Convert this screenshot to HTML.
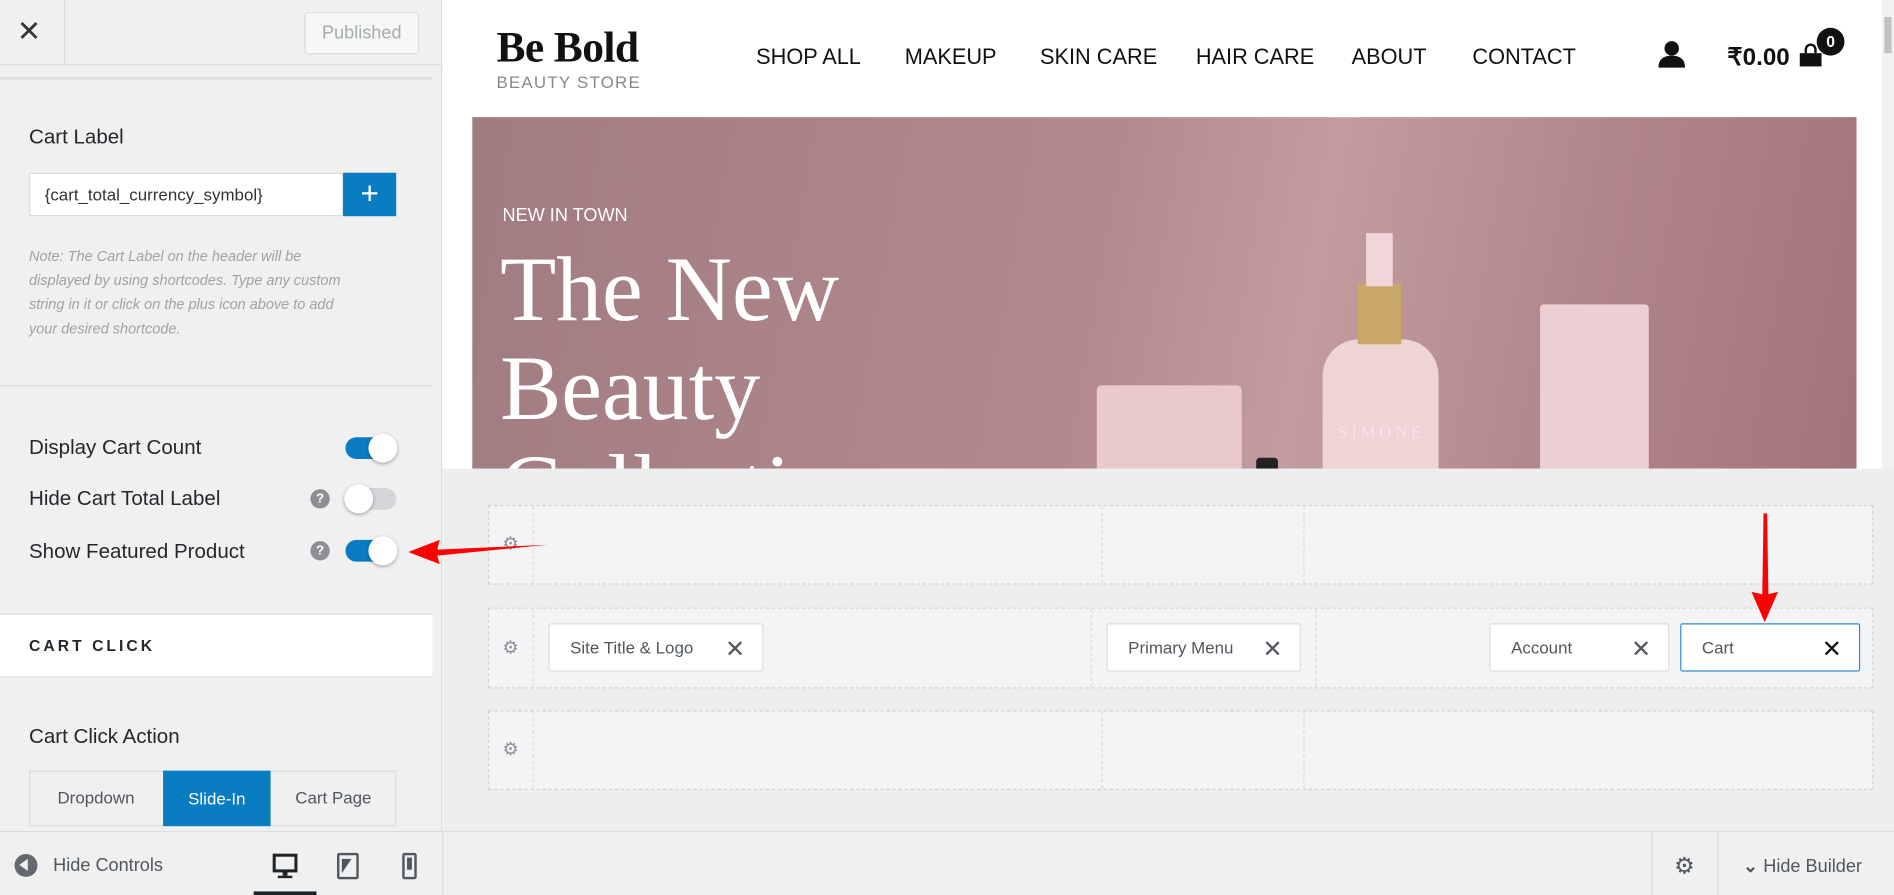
<!DOCTYPE html>
<html><head><meta charset="utf-8"><style>
*{box-sizing:border-box;margin:0;padding:0}
html,body{width:1894px;height:895px;overflow:hidden;background:#fff}
#w{position:absolute;left:0;top:0;width:1568px;height:741px;transform:scale(1.2079);transform-origin:0 0;font-family:"Liberation Sans",sans-serif;color:#23282d}
.a{position:absolute}
.t{white-space:nowrap}
.tg{position:absolute;width:42px;height:18px;border-radius:9px}
.tg i{position:absolute;top:-3px;width:24px;height:24px;border-radius:50%;background:#fff;box-shadow:0 1px 3px rgba(0,0,0,.35)}
.q{position:absolute;width:16px;height:16px;border-radius:50%;background:#8c8f94;color:#fff;font-size:11px;font-weight:bold;text-align:center;line-height:16px}
.row{position:absolute;left:404px;width:1147px;border:1px dashed #d0d3d8;background:#f3f4f6}
.vl{position:absolute;top:0;bottom:0;border-left:1px dashed #d8dadd}
.gear{position:absolute;left:11px;color:#8c8f94;font-size:15px}
.it{position:absolute;top:12px;height:40px;background:#fff;border:1px solid #ddd;border-radius:2px;font-size:14px;color:#50575e;padding:11px 0 0 17px}
.it b{position:absolute;right:14px;top:8px;font-weight:normal;font-size:20px;color:#50575e}
.nav span{position:absolute;top:37px;font-size:18px;color:#111}
</style></head><body><div id="w">
<div class="a" style="left:0;top:0;width:366px;height:741px;background:#f0f0f1;border-right:1px solid #ddd"></div>
<div class="a" style="left:0;top:0;width:366px;height:54px;border-bottom:1px solid #dcdcde"></div>
<div class="a t" style="left:14px;top:12px;font-size:24px;color:#333">✕</div>
<div class="a" style="left:53px;top:0;height:54px;border-left:1px solid #dcdcde"></div>
<div class="a t" style="left:252px;top:10px;width:95px;height:35px;border:1px solid #dcdcde;border-radius:3px;background:#f6f7f7;color:#a7aaad;font-size:15px;text-align:center;line-height:33px">Published</div>
<div class="a" style="left:0;top:64px;width:358px;border-top:2px solid #dcdcde"></div>
<div class="a t" style="left:24px;top:104px;font-size:17px">Cart Label</div>
<div class="a t" style="left:24px;top:143px;width:260px;height:36px;background:#fff;border:1px solid #ddd;font-size:14px;padding:9px 0 0 12px;color:#333">{cart_total_currency_symbol}</div>
<div class="a" style="left:284px;top:143px;width:44px;height:36px;background:#0a7dc2;color:#fff;font-size:26px;text-align:center;line-height:34px">+</div>
<div class="a" style="left:24px;top:202px;width:272px;font-size:12px;line-height:20px;font-style:italic;color:#9ea3a8">Note: The Cart Label on the header will be displayed by using shortcodes. Type any custom string in it or click on the plus icon above to add your desired shortcode.</div>
<div class="a" style="left:0;top:319px;width:358px;border-top:1px solid #dcdcde"></div>
<div class="a t" style="left:24px;top:361px;font-size:17px">Display Cart Count</div>
<div class="tg" style="left:286px;top:362px;background:#0a7dc2"><i style="left:19px"></i></div>
<div class="a t" style="left:24px;top:403px;font-size:17px">Hide Cart Total Label</div>
<div class="q" style="left:257px;top:405px">?</div>
<div class="tg" style="left:286px;top:404px;background:#d4d6da"><i style="left:-1px"></i></div>
<div class="a t" style="left:24px;top:447px;font-size:17px">Show Featured Product</div>
<div class="q" style="left:257px;top:448px">?</div>
<div class="tg" style="left:286px;top:447px;background:#0a7dc2"><i style="left:19px"></i></div>
<div class="a" style="left:0;top:508px;width:358px;height:53px;background:#fff;border-top:1px solid #ddd;border-bottom:1px solid #ddd"></div>
<div class="a t" style="left:24px;top:527px;font-size:13px;letter-spacing:2.5px;font-weight:bold;color:#23282d">CART CLICK</div>
<div class="a t" style="left:24px;top:600px;font-size:17px">Cart Click Action</div>
<div class="a" style="left:24px;top:638px;width:304px;height:46px;border:1px solid #ddd;background:#f0f0f1"></div>
<div class="a t" style="left:24px;top:652px;width:111px;text-align:center;font-size:14px;color:#50575e">Dropdown</div>
<div class="a t" style="left:135px;top:638px;width:89px;height:46px;background:#0a7dc2;color:#fff;text-align:center;font-size:14px;line-height:46px">Slide-In</div>
<div class="a t" style="left:224px;top:652px;width:104px;text-align:center;font-size:14px;color:#50575e">Cart Page</div>
<div class="a" style="left:0;top:688px;width:1568px;height:53px;background:#f0f0f1;border-top:1px solid #dcdcde"></div>
<div class="a" style="left:366px;top:688px;height:53px;border-left:1px solid #dcdcde"></div>
<div class="a" style="left:12px;top:707px;width:19px;height:19px;border-radius:50%;background:#646970"></div>
<div class="a" style="left:16px;top:711px;width:0;height:0;border-top:5.5px solid transparent;border-bottom:5.5px solid transparent;border-right:7px solid #f0f0f1"></div>
<div class="a t" style="left:44px;top:708px;font-size:15px;color:#50575e">Hide Controls</div>
<svg class="a" style="left:225px;top:706px" width="22" height="22" viewBox="0 0 22 22"><rect x="2" y="2" width="18" height="13" fill="none" stroke="#1d2327" stroke-width="2.5"/><rect x="9" y="15" width="4" height="4" fill="#1d2327"/><rect x="5" y="19" width="12" height="2" fill="#1d2327"/></svg>
<div class="a" style="left:210px;top:738px;width:52px;height:3px;background:#1d2327"></div>
<svg class="a" style="left:278px;top:706px" width="20" height="22" viewBox="0 0 20 22"><rect x="2" y="1" width="16" height="20" rx="1" fill="none" stroke="#50575e" stroke-width="2"/><path d="M5 17 L5 5 L13 5 Z" fill="#50575e"/></svg>
<svg class="a" style="left:332px;top:706px" width="14" height="22" viewBox="0 0 14 22"><rect x="2" y="1" width="10" height="20" rx="1" fill="none" stroke="#50575e" stroke-width="2"/><rect x="5" y="4" width="4" height="10" fill="#50575e"/></svg>
<div class="a" style="left:1367px;top:688px;height:53px;border-left:1px solid #dcdcde"></div>
<div class="a" style="left:1422px;top:688px;height:53px;border-left:1px solid #dcdcde"></div>
<div class="a t" style="left:1386px;top:706px;font-size:19px;color:#50575e">⚙</div>
<div class="a t" style="left:1443px;top:708px;font-size:15px;color:#50575e;font-weight:bold">⌄ <span style="font-weight:normal">Hide Builder</span></div>
<div class="a" style="left:367px;top:0;width:1201px;height:388px;background:#fff;overflow:hidden">
 <div class="a t" style="left:44px;top:18px;font-family:'Liberation Serif',serif;font-weight:bold;font-size:36px;color:#111;letter-spacing:-0.5px">Be Bold</div>
 <div class="a t" style="left:44px;top:60px;font-size:14px;color:#888;letter-spacing:1px">BEAUTY STORE</div>
 <div class="nav"><span style="left:259px">SHOP ALL</span><span style="left:382px">MAKEUP</span><span style="left:494px">SKIN CARE</span><span style="left:623px">HAIR CARE</span><span style="left:752px">ABOUT</span><span style="left:852px">CONTACT</span></div>
 <svg class="a" style="left:1006px;top:33px" width="22" height="24" viewBox="0 0 22 24"><circle cx="11" cy="7" r="6" fill="#111"/><path d="M0 23 Q0 13 11 13 Q22 13 22 23 Z" fill="#111"/></svg>
 <div class="a t" style="left:1063px;top:35px;font-size:20px;font-weight:bold;color:#111">₹0.00</div>
 <svg class="a" style="left:1122px;top:36px" width="20" height="20" viewBox="0 0 20 20"><path d="M6 8 V5 a4 4 0 0 1 8 0 V8" fill="none" stroke="#111" stroke-width="2"/><rect x="1" y="8" width="18" height="11" fill="#111"/></svg>
 <div class="a" style="left:1137px;top:23px;width:23px;height:23px;border-radius:50%;background:#111;color:#fff;font-size:13px;font-weight:bold;text-align:center;line-height:23px">0</div>
 <div class="a" style="left:1191px;top:0;width:10px;height:388px;background:#f1f1f1"></div>
 <div class="a" style="left:1193px;top:14px;width:6px;height:30px;background:#c1c1c1"></div>
 <div class="a" style="left:24px;top:97px;width:1146px;height:300px;background:linear-gradient(100deg,#a07c80 0%,#b4898e 45%,#c29ca0 60%,#b08589 80%,#a27478 100%);overflow:hidden">
  <div class="a" style="left:517px;top:222px;width:120px;height:120px;background:#e9c9cc;border-radius:4px"></div>
  <div class="a" style="left:704px;top:184px;width:96px;height:150px;background:#efd4d6;border-radius:30px 30px 0 0"></div>
  <div class="a" style="left:733px;top:138px;width:36px;height:50px;background:#c9a867"></div>
  <div class="a" style="left:740px;top:96px;width:22px;height:44px;background:#f0d6d8"></div>
  <div class="a t" style="left:717px;top:254px;font-family:'Liberation Serif',serif;color:#f5e6e6;font-size:14px;letter-spacing:3px">SIMONE</div>
  <div class="a" style="left:884px;top:155px;width:90px;height:160px;background:#eccfd2;border-radius:3px"></div>
  <div class="a" style="left:649px;top:282px;width:18px;height:20px;background:#222;border-radius:3px"></div>
  <div class="a t" style="left:25px;top:73px;color:#fff;font-size:15px">NEW IN TOWN</div>
  <div class="a" style="left:23px;top:102px;color:#fff;font-family:'Liberation Serif',serif;font-size:76px;line-height:82px">The New<br>Beauty<br>Collection</div>
 </div>
</div>
<div class="a" style="left:366px;top:388px;width:1202px;height:300px;background:#eeeeef"></div>
<div class="row" style="top:418px;height:66px"><div class="vl" style="left:36px"></div><div class="vl" style="left:507px"></div><div class="vl" style="left:674px"></div><div class="gear" style="top:22px">⚙</div></div>
<div class="row" style="top:503px;height:67px"><div class="vl" style="left:36px"></div><div class="vl" style="left:498px"></div><div class="vl" style="left:684px"></div><div class="gear" style="top:23px">⚙</div>
 <div class="it" style="left:49px;width:178px">Site Title &amp; Logo<b>✕</b></div>
 <div class="it" style="left:511px;width:161px">Primary Menu<b>✕</b></div>
 <div class="it" style="left:828px;width:149px">Account<b>✕</b></div>
 <div class="it" style="left:986px;width:149px;border-color:#2e8dcf">Cart<b style="color:#111">✕</b></div>
</div>
<div class="row" style="top:588px;height:66px"><div class="vl" style="left:36px"></div><div class="vl" style="left:507px"></div><div class="vl" style="left:674px"></div><div class="gear" style="top:22px">⚙</div></div>
<svg class="a" style="left:0;top:0" width="1568" height="741"><path d="M453 451 L362 455 L364 447 L338 457 L364 467 L362 460 Z" fill="#f00"/><path d="M1460 425 L1463 425 L1464 492 L1472 490 L1461 515 L1450 490 L1459 492 Z" fill="#f00"/></svg>
</div></body></html>
